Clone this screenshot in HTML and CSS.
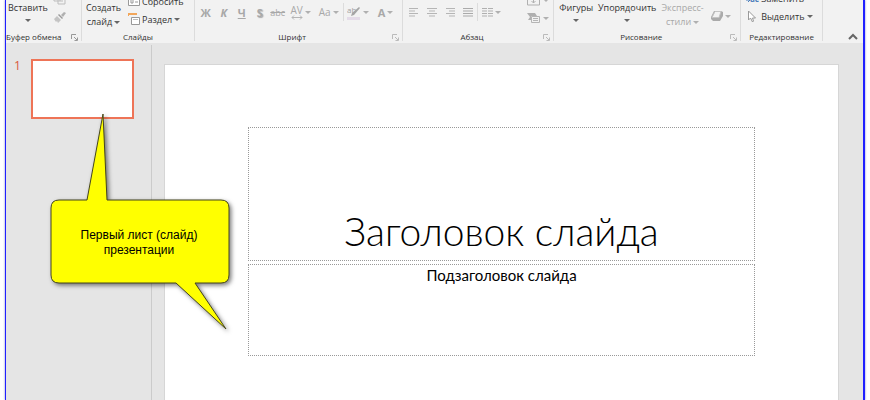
FILE: index.html
```html
<!DOCTYPE html>
<html lang="ru">
<head>
  <meta charset="UTF-8">
  <meta name="viewport" content="width=device-width, initial-scale=1.0">
  <title>Презентация</title>
  <link rel="stylesheet" href="styles.css">
</head>
<body>
  <div class="app">
    <header class="ribbon">
      <section class="group">
        <div class="tools paste-tools">
          <button class="big">Вставить<i class="arrow"></i></button>
          <div class="stack icons">
            <button aria-label="Копировать"><svg width="14" height="12" viewBox="0 0 14 12"><path d="M1 0h6v8H1zM5 3h7v8H5zM7 6h3M7 8h3" fill="#f2f2f2" stroke="#bdbdbd"/></svg></button>
            <button aria-label="Формат по образцу"><svg width="14" height="12" viewBox="0 0 14 12"><path d="M11 1l2 1-3 4-2-2z" fill="#b0b0b0"/><path d="M6 3l4 4-1 1-4-4z" fill="#999"/><path d="M4 5l4 4-3 3-1-2-1 1-2-3z" fill="#c4c4c4"/></svg></button>
          </div>
        </div>
        <div class="caption"><span>Буфер обмена</span><button class="launcher" aria-label="Буфер обмена"><svg width="7" height="7" viewBox="0 0 7 7"><path d="M.5 5V.5H5M3 3l3 3M6.500 3.500v3h-3" fill="none" stroke="#999"/></svg></button></div>
      </section>

      <section class="group">
        <div class="tools new-tools">
          <button class="big">Создать<span>слайд<i class="arrow"></i></span></button>
          <div class="stack">
            <button><svg width="12" height="12" viewBox="0 0 12 12"><path d="M.5.5h11v10H.5zM3 3h2v5H3zM7 4h3M7 7h3" fill="#fff" stroke="#999"/></svg>Сбросить</button>
            <button><svg width="12" height="12" viewBox="0 0 12 12"><path d="M0 1h9M0 0v3" stroke="#f2a65a" stroke-width="2"/><path d="M3.500 4.500h8v7h-8z" fill="#fff" stroke="#999"/><path d="M5 6.500h5" stroke="#bbb"/></svg>Раздел<i class="arrow"></i></button>
          </div>
        </div>
        <div class="caption"><span>Слайды</span></div>
      </section>

      <section class="group off">
        <div class="tools font-tools">
          <button class="glyph"><b>Ж</b></button>
          <button class="glyph"><b><em>К</em></b></button>
          <button class="glyph"><b><u>Ч</u></b></button>
          <button class="glyph shadow"><b>S</b></button>
          <button class="glyph small"><s>abc</s></button>
          <button class="glyph wide"><span class="spacing">AV<svg width="12" height="5" viewBox="0 0 12 5"><path d="M1 2.500h10M3 .5l-2 2 2 2M9 .5l2 2-2 2" fill="none" stroke="#b5b5b5"/></svg></span><i class="arrow"></i></button>
          <button class="glyph wide">Aa<i class="arrow"></i></button>
          <span class="divider"></span>
          <button class="glyph wide" aria-label="Цвет выделения"><svg width="14" height="16" viewBox="0 0 14 16"><text x="0" y="9" class="pen-text">ab</text><path d="M12 3l1 1-6 7-3 1 1-3z" fill="#a5a5a5"/><path d="M0 14.500h13" stroke="#e4dbe8" stroke-width="3"/></svg><i class="arrow"></i></button>
          <button class="glyph wide color"><b>A</b><i class="arrow"></i></button>
        </div>
        <div class="caption with-launcher"><span>Шрифт</span><button class="launcher" aria-label="Шрифт"><svg width="7" height="7" viewBox="0 0 7 7"><path d="M.5 5V.5H5M3 3l3 3M6.500 3.500v3h-3" fill="none" stroke="#bbb"/></svg></button></div>
      </section>

      <section class="group off">
        <div class="tools para-tools">
          <button class="glyph" aria-label="По левому краю"><svg width="10" height="9" viewBox="0 0 10 9"><path d="M0 .5h9M0 3h6M0 5.500h9M0 8h6" stroke="#b5b5b5"/></svg></button>
          <button class="glyph" aria-label="По центру"><svg width="10" height="9" viewBox="0 0 10 9"><path d="M0 .5h10M2 3h6M0 5.500h10M2 8h6" stroke="#b5b5b5"/></svg></button>
          <button class="glyph" aria-label="По правому краю"><svg width="10" height="9" viewBox="0 0 10 9"><path d="M1 .5h9M4 3h6M1 5.500h9M4 8h6" stroke="#b5b5b5"/></svg></button>
          <button class="glyph" aria-label="По ширине"><svg width="10" height="9" viewBox="0 0 10 9"><path d="M0 .5h10M0 3h10M0 5.500h10M0 8h10" stroke="#aaa"/></svg></button>
          <span class="divider"></span>
          <button class="glyph wide" aria-label="Колонки"><svg width="11" height="9" viewBox="0 0 11 9"><path d="M0 .5h5M6 .5h5M0 3h5M6 3h5M0 5.500h5M6 5.500h5M0 8h5M6 8h5" stroke="#b0b0b0"/></svg><i class="arrow"></i></button>
          <div class="stack para-side">
            <button aria-label="Выровнять текст"><svg width="14" height="12" viewBox="0 0 14 12"><path d="M3 3H.5v8h12V3H10M6.500 2v7M4.500 7l2 2 2-2" fill="none" stroke="#b0b0b0"/></svg><i class="arrow"></i></button>
            <button aria-label="Преобразовать в SmartArt"><svg width="14" height="12" viewBox="0 0 14 12"><path d="M0 1h8l2 3H4v4H1l2-3z" fill="#b0b0b0"/><path d="M4.500 4.500h8v6h-8zM6 6.500h5M6 8.500h5" fill="#f2f2f2" stroke="#b5b5b5"/></svg><i class="arrow"></i></button>
          </div>
        </div>
        <div class="caption with-launcher"><span>Абзац</span><button class="launcher" aria-label="Абзац"><svg width="7" height="7" viewBox="0 0 7 7"><path d="M.5 5V.5H5M3 3l3 3M6.500 3.500v3h-3" fill="none" stroke="#bbb"/></svg></button></div>
      </section>

      <section class="group">
        <div class="tools draw-tools">
          <button class="big">Фигуры<i class="arrow"></i></button>
          <button class="big">Упорядочить<i class="arrow"></i></button>
          <button class="big off">Экспресс-<span>стили<i class="arrow"></i></span></button>
          <button class="effects off" aria-label="Эффекты фигуры"><svg width="12" height="12" viewBox="0 0 12 12"><path d="M3 1h7l2 1v4l-3 5H2L0 9V7z" fill="#aaa"/><path d="M4 1.500h6L8 7.500H1z" fill="#f2f2f2" stroke="#c4c4c4"/></svg><i class="arrow"></i></button>
        </div>
        <div class="caption with-launcher"><span>Рисование</span><button class="launcher" aria-label="Рисование"><svg width="7" height="7" viewBox="0 0 7 7"><path d="M.5 5V.5H5M3 3l3 3M6.500 3.500v3h-3" fill="none" stroke="#bbb"/></svg></button></div>
      </section>

      <section class="group">
        <div class="tools edit-tools">
          <div class="stack">
            <button><svg width="14" height="12" viewBox="0 0 14 12"><path d="M1 4v4h4M3 6l2 2-2 2" fill="none" stroke="#4a7ebb"/><text x="5" y="10" class="replace-text">ac</text></svg>Заменить</button>
            <button><svg width="14" height="12" viewBox="0 0 14 12"><path d="M3.500 1v9l2-2 2 4 1-1-1-3h3z" fill="#fff" stroke="#999"/></svg>Выделить<i class="arrow"></i></button>
          </div>
        </div>
        <div class="caption"><span>Редактирование</span></div>
      </section>

      <button class="collapse" aria-label="Свернуть ленту"><svg width="10" height="7" viewBox="0 0 10 7"><path d="M1 6l4-4 4 4" fill="none" stroke="#666" stroke-width="2"/></svg></button>
    </header>

    <main class="workspace">
      <aside class="thumbs">
        <span class="number">1</span>
        <div class="thumb"></div>
      </aside>
      <div class="editor">
        <div class="slide">
          <h1 class="title">Заголовок слайда</h1>
          <p class="subtitle">Подзаголовок слайда</p>
        </div>
      </div>
    </main>

    <div class="callout">
      <svg class="bubble" width="190" height="224" viewBox="0 0 190 224"><path d="M10 88H38L54 2L58 88H172Q180 88 180 96V163Q180 171 172 171H146L177 217L127 171H10Q2 171 2 163V96Q2 88 10 88Z" fill="#ff0" stroke="#45451c"/></svg>
      <p class="callout-text">Первый лист (слайд) презентации</p>
    </div>
  </div>
</body>
</html>
```

FILE: styles.css
```css
* {
  box-sizing: border-box;
}
body {
  margin: 0;
  background-color: #fff;
  font-family: "Open Sans", "Noto Sans", sans-serif;
  font-size: 9px;
  color: #333;
}
h1, p {
  margin: 0;
}
button {
  display: flex;
  align-items: center;
  padding: 0;
  border: none;
  background: none;
  font: inherit;
  color: inherit;
  white-space: nowrap;
}
svg {
  display: block;
  flex: none;
}
.app {
  position: relative;
  display: flex;
  flex-direction: column;
  height: 100vh;
  margin: 0 5px;
  border: solid #2020ff;
  border-width: 0 2px 0 1px;
  box-shadow: 0 0 2px #8888cc;
  overflow: hidden;
}

/* ribbon */
.ribbon {
  display: grid;
  grid-template-columns: 76fr 113fr 208fr 152fr 187fr 82fr 40fr;
  height: 43px;
  background-color: #f2f2f2;
}
.group {
  display: flex;
  flex-direction: column;
  min-width: 0;
  height: 41px;
  border-right: 1px solid #dcdcdc;
}
.tools {
  display: flex;
  align-items: flex-end;
  gap: 4px;
  height: 31px;
  padding: 0 2px;
  overflow: hidden;
}
.caption {
  position: relative;
  height: 10px;
  font-size: 8px;
  line-height: 12px;
  text-align: center;
  white-space: nowrap;
}
.with-launcher {
  padding-right: 12px;
}
.launcher {
  position: absolute;
  right: 3px;
  top: 3px;
}
.group:first-child .caption {
  text-align: left;
}
.arrow {
  display: inline-block;
  margin-left: 2px;
  border: solid transparent;
  border-width: 3px 3px 0;
  border-top-color: #666;
  vertical-align: middle;
}
.off .tools, .tools .off, .off .glyph {
  color: #a8a8a8;
}
.off .arrow {
  border-top-color: #b0b0b0;
}
.big {
  flex-direction: column;
  height: 30px;
  line-height: 14px;
}
.big > .arrow {
  margin: 4px 0 0;
}
.stack {
  display: flex;
  flex-direction: column;
}
.stack button {
  gap: 2px;
  height: 18px;
}
.stack .arrow {
  margin-left: 0;
}
.paste-tools {
  gap: 5px;
}
.tools .icons {
  padding-bottom: 5px;
}
.new-tools {
  gap: 7px;
  padding: 0 4px 2px;
}
.new-tools .big {
  height: 28px;
}
.new-tools .stack {
  padding-bottom: 1px;
}
.font-tools, .para-tools {
  gap: 0;
}
.glyph {
  justify-content: center;
  width: 18px;
  height: 20px;
  margin-bottom: 9px;
  font-size: 11px;
}
.glyph.wide {
  width: 28px;
  font-size: 10px;
}
.glyph.small {
  font-size: 9px;
}
.glyph.color {
  font-size: 11px;
}
.shadow {
  text-shadow: 1px 1px 1px #aaa;
}
.spacing {
  display: flex;
  flex-direction: column;
  align-items: center;
  line-height: 10px;
}
.pen-text {
  font-size: 8px;
  fill: #a0a0a0;
}
.replace-text {
  font-size: 8px;
  font-weight: bold;
  fill: #4a7ebb;
}
.divider {
  width: 1px;
  height: 18px;
  margin-bottom: 10px;
  background-color: #dcdcdc;
}
.para-side {
  margin-left: auto;
  padding: 0 2px 4px 0;
}
.draw-tools {
  gap: 5px;
  padding-left: 5px;
}
.effects {
  height: 30px;
  margin-left: 2px;
}
.edit-tools {
  padding: 0 4px 6px;
}
.collapse {
  align-self: end;
  justify-self: end;
  padding: 0 5px 3px 0;
}

/* slides */
.workspace {
  display: flex;
  flex: 1;
  min-height: 0;
  background-color: #e5e5e5;
}
.thumbs {
  display: flex;
  flex: none;
  align-items: flex-start;
  gap: 10px;
  width: 146px;
  margin-top: 2px;
  padding: 14px 17px 0 8px;
  border-right: 1px solid #cbcbcb;
}
.number {
  font-size: 12px;
  line-height: 13px;
  color: #d9593c;
}
.thumb {
  flex: 1;
  height: 60px;
  border: 2px solid #ee7457;
  background-color: #fff;
}
.editor {
  flex: 1;
  padding: 21px 24px 0 12px;
}
.slide {
  display: flex;
  flex-direction: column;
  gap: 3px;
  height: 380px;
  padding: 62px 83px 0;
  border: 1px solid #d6d6d6;
  background-color: #fff;
  font-family: Lato, "Open Sans", sans-serif;
  color: #000;
  text-align: center;
}
.title, .subtitle {
  border: 1px dotted #999;
}
.title {
  display: flex;
  align-items: flex-end;
  justify-content: center;
  height: 134px;
  padding-bottom: 6px;
  font-size: 39px;
  font-weight: 300;
  line-height: 46px;
}
.subtitle {
  height: 92px;
  font-size: 15px;
  line-height: 20px;
}

/* callout */
.callout {
  position: absolute;
  left: 43px;
  top: 112px;
  width: 190px;
  height: 224px;
  padding: 88px 12px 51px 2px;
  display: flex;
  align-items: center;
  justify-content: center;
}
.bubble {
  position: absolute;
  left: 0;
  top: 0;
  filter: drop-shadow(2px 2px 2px rgba(0, 0, 0, 0.5));
}
.callout-text {
  position: relative;
  width: 140px;
  font-family: "Liberation Sans", Arial, sans-serif;
  font-size: 12px;
  line-height: 15px;
  color: #000;
  text-align: center;
}
```
